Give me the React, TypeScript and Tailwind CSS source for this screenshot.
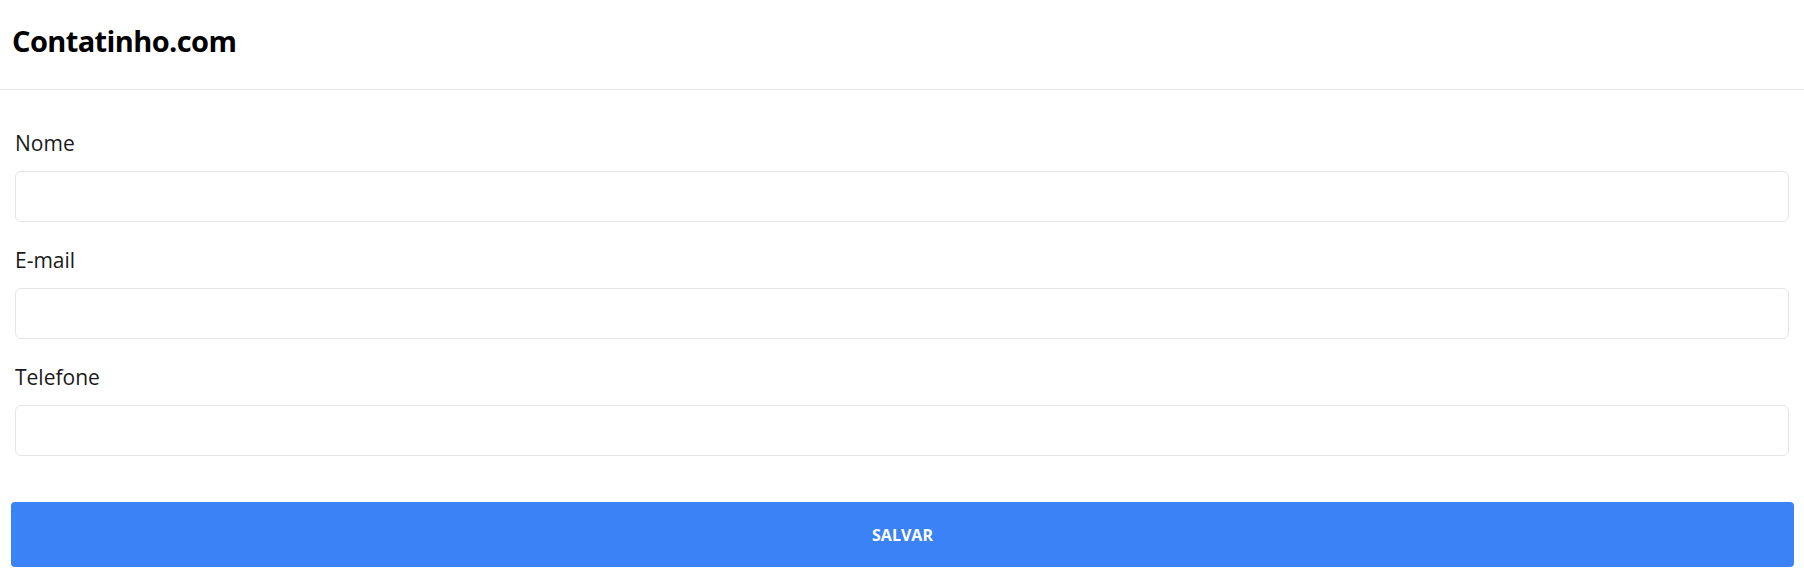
export default function App() {
  const fields = [
    { id: "nome", label: "Nome", type: "text" },
    { id: "email", label: "E-mail", type: "email" },
    { id: "telefone", label: "Telefone", type: "tel" },
  ];

  return (
    <div className="min-h-screen bg-white font-['Open_Sans',sans-serif] text-[#111]">
      <header className="h-[90px] px-3 flex items-center border-b border-[#e5e5e5] pb-[8px]">
        <h1 className="text-[29px] leading-[36px] font-bold tracking-[-0.6px] text-black">
          Contatinho.com
        </h1>
      </header>

      <form className="pt-[39px]" onSubmit={(e) => e.preventDefault()}>
        <div className="px-[15px] flex flex-col gap-6">
          {fields.map((field) => (
            <div key={field.id} className="flex flex-col">
              <label
                htmlFor={field.id}
                className="text-[21px] leading-[28px] mb-[14px] text-[#1a1a1a]"
              >
                {field.label}
              </label>
              <input
                id={field.id}
                type={field.type}
                className="h-[51px] w-full rounded-md border border-[#e5e5e5] bg-white px-3 outline-none"
              />
            </div>
          ))}
        </div>

        <div className="pl-[11px] pr-[10px] mt-[46px]">
          <button
            type="submit"
            className="w-full h-[65px] rounded bg-[#3b82f6] text-white text-[16px] font-bold uppercase"
          >
            Salvar
          </button>
        </div>
      </form>
    </div>
  );
}
